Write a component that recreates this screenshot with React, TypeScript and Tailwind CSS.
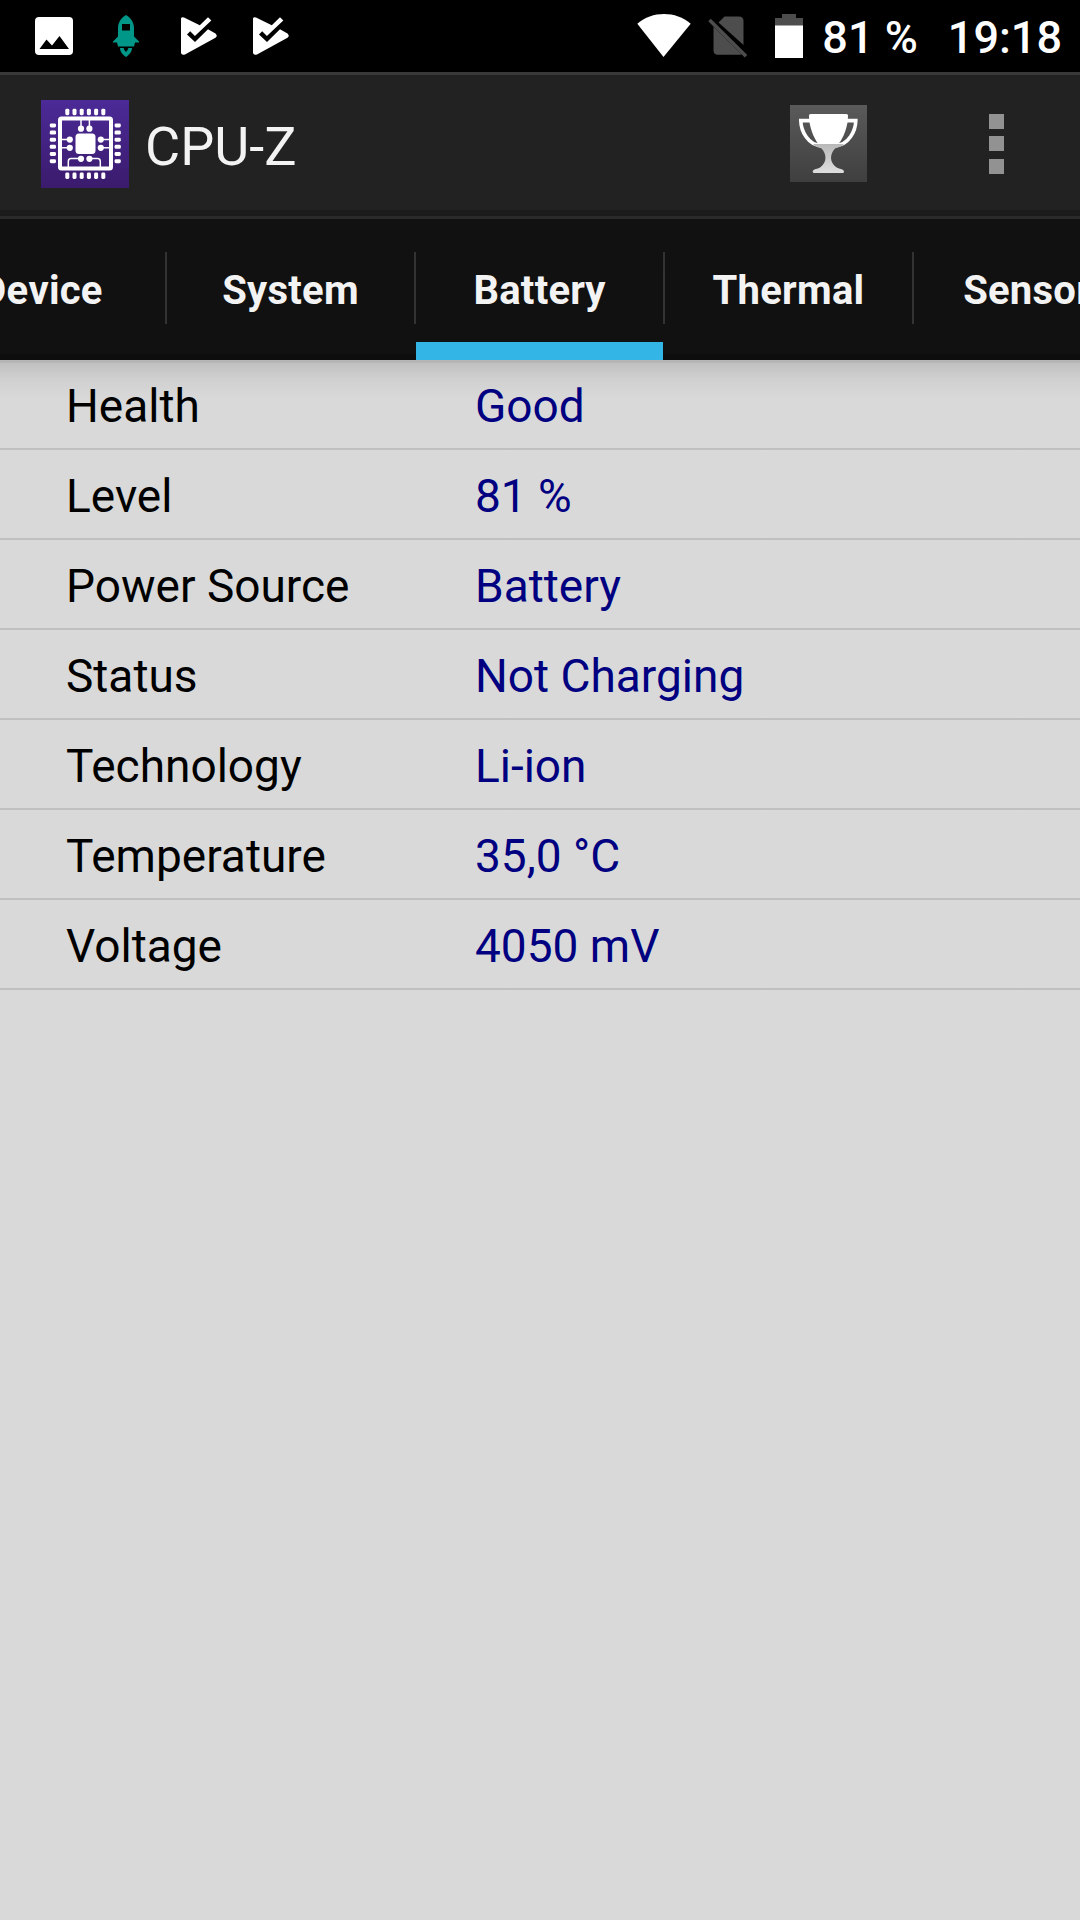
import React from 'react';

const tabs = ["Device", "System", "Battery", "Thermal", "Sensors"];

const batteryInfo = [
    { label: "Health", value: "Good" },
    { label: "Level", value: "81 %" },
    { label: "Power Source", value: "Battery" },
    { label: "Status", value: "Not Charging" },
    { label: "Technology", value: "Li-ion" },
    { label: "Temperature", value: "35,0 °C" },
    { label: "Voltage", value: "4050 mV" },
];

const PhotoIcon = () => (
    <svg width="38" height="38" viewBox="0 0 38 38">
        <rect width="38" height="38" rx="4" fill="#fff" />
        <path d="M4.5 32 L11.5 22.5 L17 28.5 L24.5 19 L34 32 Z" fill="#000" />
    </svg>
);

const RocketIcon = () => (
    <svg width="26" height="42" viewBox="0 0 26 42" fill="#009688">
        <path
            fillRule="evenodd"
            d="M13 0 C17 2 21 7 21 13 V21.5 L26 26.5 V27.5 H22 L21 31.5 H5 L4 27.5 H0 V26.5 L5 21.5 V13 C5 7 9 2 13 0 Z M9 9 V15.5 H17 V9 Z"
        />
        <path d="M7 33 H11 L10.7 34 L13 37 L15.3 34 L15 33 H19 C19 37 16 40 13 42 C10 40 7 37 7 33 Z" />
    </svg>
);

const PlayCheckIcon = () => (
    <svg width="36" height="38" viewBox="0 0 36 38">
        <path
            d="M0 1.5 Q0.5 -0.4 3 0.4 L18.8 8.2 L27 0.3 L30.3 3.5 L13.9 19 L9.2 14.3 L6 17.5 L14 25 L27 12.3 L34.5 16.5 Q37 19 34.5 20.8 L4 37.5 Q0.5 38.5 0 36 Z"
            fill="#fff"
        />
    </svg>
);

const WifiIcon = () => (
    <svg width="54" height="43" viewBox="0 0 54 43">
        <path d="M0.3 9.8 C15 -3.2 39 -3.2 53.7 9.8 L26.5 43 Z" fill="#fff" />
    </svg>
);

const NoSimIcon = () => (
    <svg width="40" height="42" viewBox="0 0 40 42">
        <path d="M10.5 6.5 L16.5 0.5 H31 Q35.5 0.5 35.5 5 V29 Z" fill="#4d4d4d" />
        <path d="M5.5 10.5 L33.5 38.2 Q32.8 38.7 31 38.7 H10 Q5.5 38.7 5.5 34.2 Z" fill="#4d4d4d" />
        <path d="M1.5 4 L38 40.3" stroke="#4d4d4d" strokeWidth="3.6" />
    </svg>
);

const BatteryIcon = () => (
    <svg width="28" height="44" viewBox="0 0 28 44">
        <path d="M7 0 H21 V4 H28 V12 H0 V4 H7 Z" fill="#4d4d4d" />
        <rect y="11.5" width="28" height="32.5" fill="#fff" />
    </svg>
);

const pins = [0, 1, 2, 3, 4, 5];

const CpuIcon = () => (
    <svg width="88" height="88" viewBox="0 0 88 88">
        <defs>
            <linearGradient id="cpuBg" x1="0" y1="0" x2="0" y2="1">
                <stop offset="0" stopColor="#4c2a98" />
                <stop offset="1" stopColor="#3a1b6c" />
            </linearGradient>
        </defs>
        <rect width="88" height="88" fill="url(#cpuBg)" />
        <rect x="19" y="18.5" width="51" height="50" rx="1.5" fill="none" stroke="#fff" strokeWidth="4" />
        <g fill="#fff">
            {pins.map((i) => (
                <React.Fragment key={i}>
                    <rect x={24.3 + i * 7.2} y="8.8" width="4" height="6.4" rx="1.4" />
                    <rect x={24.3 + i * 7.2} y="72.6" width="4" height="6.4" rx="1.4" />
                    <rect x="8.8" y={23.4 + i * 7.15} width="6.2" height="4" rx="1.4" />
                    <rect x="73.6" y={23.4 + i * 7.15} width="6.2" height="4" rx="1.4" />
                </React.Fragment>
            ))}
            <rect x="34.5" y="33.5" width="20" height="20.5" rx="3.5" />
            <circle cx="40" cy="28.7" r="3.1" />
            <circle cx="48.4" cy="28.7" r="3.1" />
            <circle cx="28.8" cy="39.6" r="3.1" />
            <circle cx="28.8" cy="47.8" r="3.1" />
            <circle cx="59.8" cy="39.6" r="3.1" />
            <circle cx="59.8" cy="47.8" r="3.1" />
            <circle cx="40" cy="58.8" r="3.1" />
            <circle cx="48.4" cy="58.8" r="3.1" />
        </g>
        <g fill="none" stroke="#fff" strokeWidth="1.5">
            <path d="M40 20 V28 M48.4 20 V28 M20 39.6 H28 M20 47.8 H28 M60 39.6 H69 M60 47.8 H69" />
            <path d="M40 58.5 H30 Q27.3 58.5 27.3 61.5 V68 M48.4 58.5 H56.5 Q59.3 58.5 59.3 61.5 V68" />
        </g>
    </svg>
);

const TrophyIcon = () => (
    <svg width="77" height="77" viewBox="0 0 77 77">
        <defs>
            <linearGradient id="trophyBg" x1="0" y1="0" x2="0" y2="1">
                <stop offset="0" stopColor="#5a5a5a" />
                <stop offset="1" stopColor="#3f3f3f" />
            </linearGradient>
            <linearGradient id="trophyStem" x1="0" y1="0" x2="0" y2="1">
                <stop offset="0" stopColor="#b8b8b8" />
                <stop offset="1" stopColor="#dedede" />
            </linearGradient>
        </defs>
        <rect width="77" height="77" fill="url(#trophyBg)" />
        <path d="M20 15.6 H10.8 C11 26 18 40 31 40.5 M57 15.6 H65.8 C65.6 26 58.6 40 45.6 40.5" fill="none" stroke="#fff" strokeWidth="3.6" />
        <path d="M20.5 9 H56.5 Q58 9 58 10.5 C58 21 54 32 48.5 39 H28.3 C23 32 19 21 19 10.5 Q19 9 20.5 9 Z" fill="#fff" />
        <path
            d="M23 39 H54 C51 41.5 48.5 42.6 45.3 43.2 C39.5 49 39.5 57 46 62 C49 64 54 64 54 66.5 Q54 68 52.5 68 H24.3 Q22.7 68 22.7 66.5 C22.7 64 28 64 30.7 62 C37 57 37 49 31.3 43.2 C28 42.6 25.5 41.5 23 39 Z"
            fill="url(#trophyStem)"
        />
    </svg>
);

const StatusBar: React.FC = () => (
    <div className="flex h-[72px] items-start justify-between bg-black text-white">
        <div className="flex items-start pt-[15px] pl-[35px]">
            <div className="mt-[2px]"><PhotoIcon /></div>
            <div className="ml-[40px]"><RocketIcon /></div>
            <div className="mt-[2px] ml-[42px]"><PlayCheckIcon /></div>
            <div className="mt-[2px] ml-[36px]"><PlayCheckIcon /></div>
        </div>
        <div className="flex items-start pt-[14px] pr-[18px]">
            <WifiIcon />
            <div className="mt-[2px] ml-[17px]"><NoSimIcon /></div>
            <div className="ml-[27px]"><BatteryIcon /></div>
            <span className="ml-[19px] text-[45px] leading-[48px] font-medium whitespace-pre">81 %</span>
            <span className="ml-[30px] text-[45px] leading-[48px] font-medium">19:18</span>
        </div>
    </div>
);

const AppBar: React.FC = () => (
    <div className="flex h-[147px] flex-col bg-[#222222]">
        <div className="h-[3px] bg-[#393939]" />
        <div className="flex h-[135px] items-center pl-[41px]">
            <div className="mt-[3px]"><CpuIcon /></div>
            <span className="mt-[8px] ml-[16px] text-[54px] leading-[64px] text-[#f3f3f3]">CPU-Z</span>
            <div className="mt-[2px] mr-[122px] ml-auto"><TrophyIcon /></div>
            <div className="mt-[3px] mr-[76px] flex flex-col">
                <div className="size-[15px] bg-[#929292]" />
                <div className="mt-[7px] size-[15px] bg-[#929292]" />
                <div className="mt-[8px] size-[15px] bg-[#929292]" />
            </div>
        </div>
        <div className="h-[6px] bg-[#1b1b1b]" />
        <div className="h-[3px] bg-[#2a2a2a]" />
    </div>
);

const TabBar: React.FC = () => (
    <div className="flex h-[141px] overflow-hidden bg-linear-to-b from-[#111111] from-[135px] to-[#0d0d0d] to-[135px]">
        {tabs.map((tab) => (
            <div key={tab} className="flex shrink-0 items-start first:-ml-[82px]">
                {tab !== "Device" && <div className="mt-[33px] h-[72px] w-[2px] bg-[#333333]" />}
                <div className="flex h-[141px] w-[247px] flex-col">
                    <div className="flex h-[123px] items-center justify-center pt-[20px] text-[40px] font-bold tracking-[0.25px] text-[#f3f3f3] [font-kerning:none]">
                        {tab}
                    </div>
                    {tab === "Battery" && <div className="h-[18px] bg-[#33b5e5]" />}
                </div>
            </div>
        ))}
    </div>
);

const App: React.FC = () => {
    return (
        <div className="h-[1920px] w-[1080px] overflow-hidden bg-[#d9d9d9] font-['Roboto',sans-serif]">
            <StatusBar />
            <AppBar />
            <TabBar />
            <div className="border-t-[3px] border-[#b5b5b5] bg-linear-to-b from-[#c0c0c0] via-[#d0d0d0] via-[16px] to-[#d9d9d9] to-[36px]">
                {batteryInfo.map((item, idx) => (
                    <div
                        key={item.label}
                        className={`flex items-center border-b-2 border-[#c0c0c0] pl-[66px] text-[46px] ${idx === 0 ? 'h-[87px] pt-px' : 'h-[90px] pt-[4px]'}`}
                    >
                        <span className="w-[409px] leading-[56px] text-black">{item.label}</span>
                        <span className="leading-[56px] text-[#000080]">{item.value}</span>
                    </div>
                ))}
            </div>
        </div>
    );
};

export default App;
